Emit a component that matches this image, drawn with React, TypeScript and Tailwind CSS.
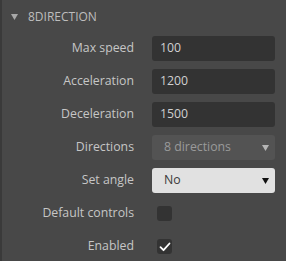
import { FC } from "react";

type Row =
  | { label: string; kind: "input"; value: string }
  | { label: string; kind: "select"; value: string; disabled?: boolean }
  | { label: string; kind: "check"; checked: boolean };

const rows: Row[] = [
  { label: "Max speed", kind: "input", value: "100" },
  { label: "Acceleration", kind: "input", value: "1200" },
  { label: "Deceleration", kind: "input", value: "1500" },
  { label: "Directions", kind: "select", value: "8 directions", disabled: true },
  { label: "Set angle", kind: "select", value: "No" },
  { label: "Default controls", kind: "check", checked: false },
  { label: "Enabled", kind: "check", checked: true },
];

const Caret: FC<{ className: string }> = ({ className }) => (
  <svg width="7" height="6" viewBox="0 0 7 6" className={className}>
    <path d="M0 0 L7 0 L3.5 6 Z" fill="currentColor" />
  </svg>
);

const Field: FC<{ row: Row }> = ({ row }) => {
  if (row.kind === "input") {
    return (
      <div className="flex h-[25px] w-[123px] items-center rounded-[3px] bg-[#333333] pl-[8px] text-[#d0d0d0]">
        {row.value}
      </div>
    );
  }
  if (row.kind === "select") {
    return (
      <div
        className={
          row.disabled
            ? "flex h-[25px] w-[123px] items-center justify-between rounded-[3px] bg-[#535353] pr-[6px] pl-[12px] text-[#9a9a9a]"
            : "flex h-[25px] w-[123px] items-center justify-between rounded-[3px] bg-[#e1e1e1] pr-[6px] pl-[12px] text-[#3a3a3a]"
        }
      >
        <span>{row.value}</span>
        <Caret className={row.disabled ? "text-[#b5b5b5]" : "text-[#111111]"} />
      </div>
    );
  }
  return (
    <div className="flex h-[25px] items-center pl-[5px]">
      <div className="flex h-[15px] w-[15px] items-center justify-center rounded-[3px] bg-[#333333]">
        {row.checked && (
          <svg width="12" height="10" viewBox="0 0 12 10">
            <path
              d="M1.5 5.2 L4.5 8.2 L10.5 1.5"
              fill="none"
              stroke="#ffffff"
              strokeWidth="1.8"
              strokeLinecap="round"
              strokeLinejoin="round"
            />
          </svg>
        )}
      </div>
    </div>
  );
};

const App: FC = () => {
  return (
    <div
      className="h-[261px] w-[286px] overflow-hidden border-l-2 border-[#3a3a3a] bg-[#484848] text-[12.3px]"
      style={{ fontFamily: "'Open Sans', 'Noto Sans', sans-serif" }}
    >
      {/* Section header */}
      <div className="flex h-[33px] items-center gap-[10px] pl-[9px]">
        <Caret className="text-[#a8a8a8]" />
        <span className="text-[12px] text-[#bdbdbd]">8DIRECTION</span>
      </div>

      {/* Property rows */}
      <div className="flex flex-col gap-[8px] pt-[3px]">
        {rows.map((row) => (
          <div key={row.label} className="flex h-[25px] items-center">
            <div className="w-[132px] text-right text-[#c6c6c6]">{row.label}</div>
            <div className="ml-[18px]">
              <Field row={row} />
            </div>
          </div>
        ))}
      </div>
    </div>
  );
};

export default App;
